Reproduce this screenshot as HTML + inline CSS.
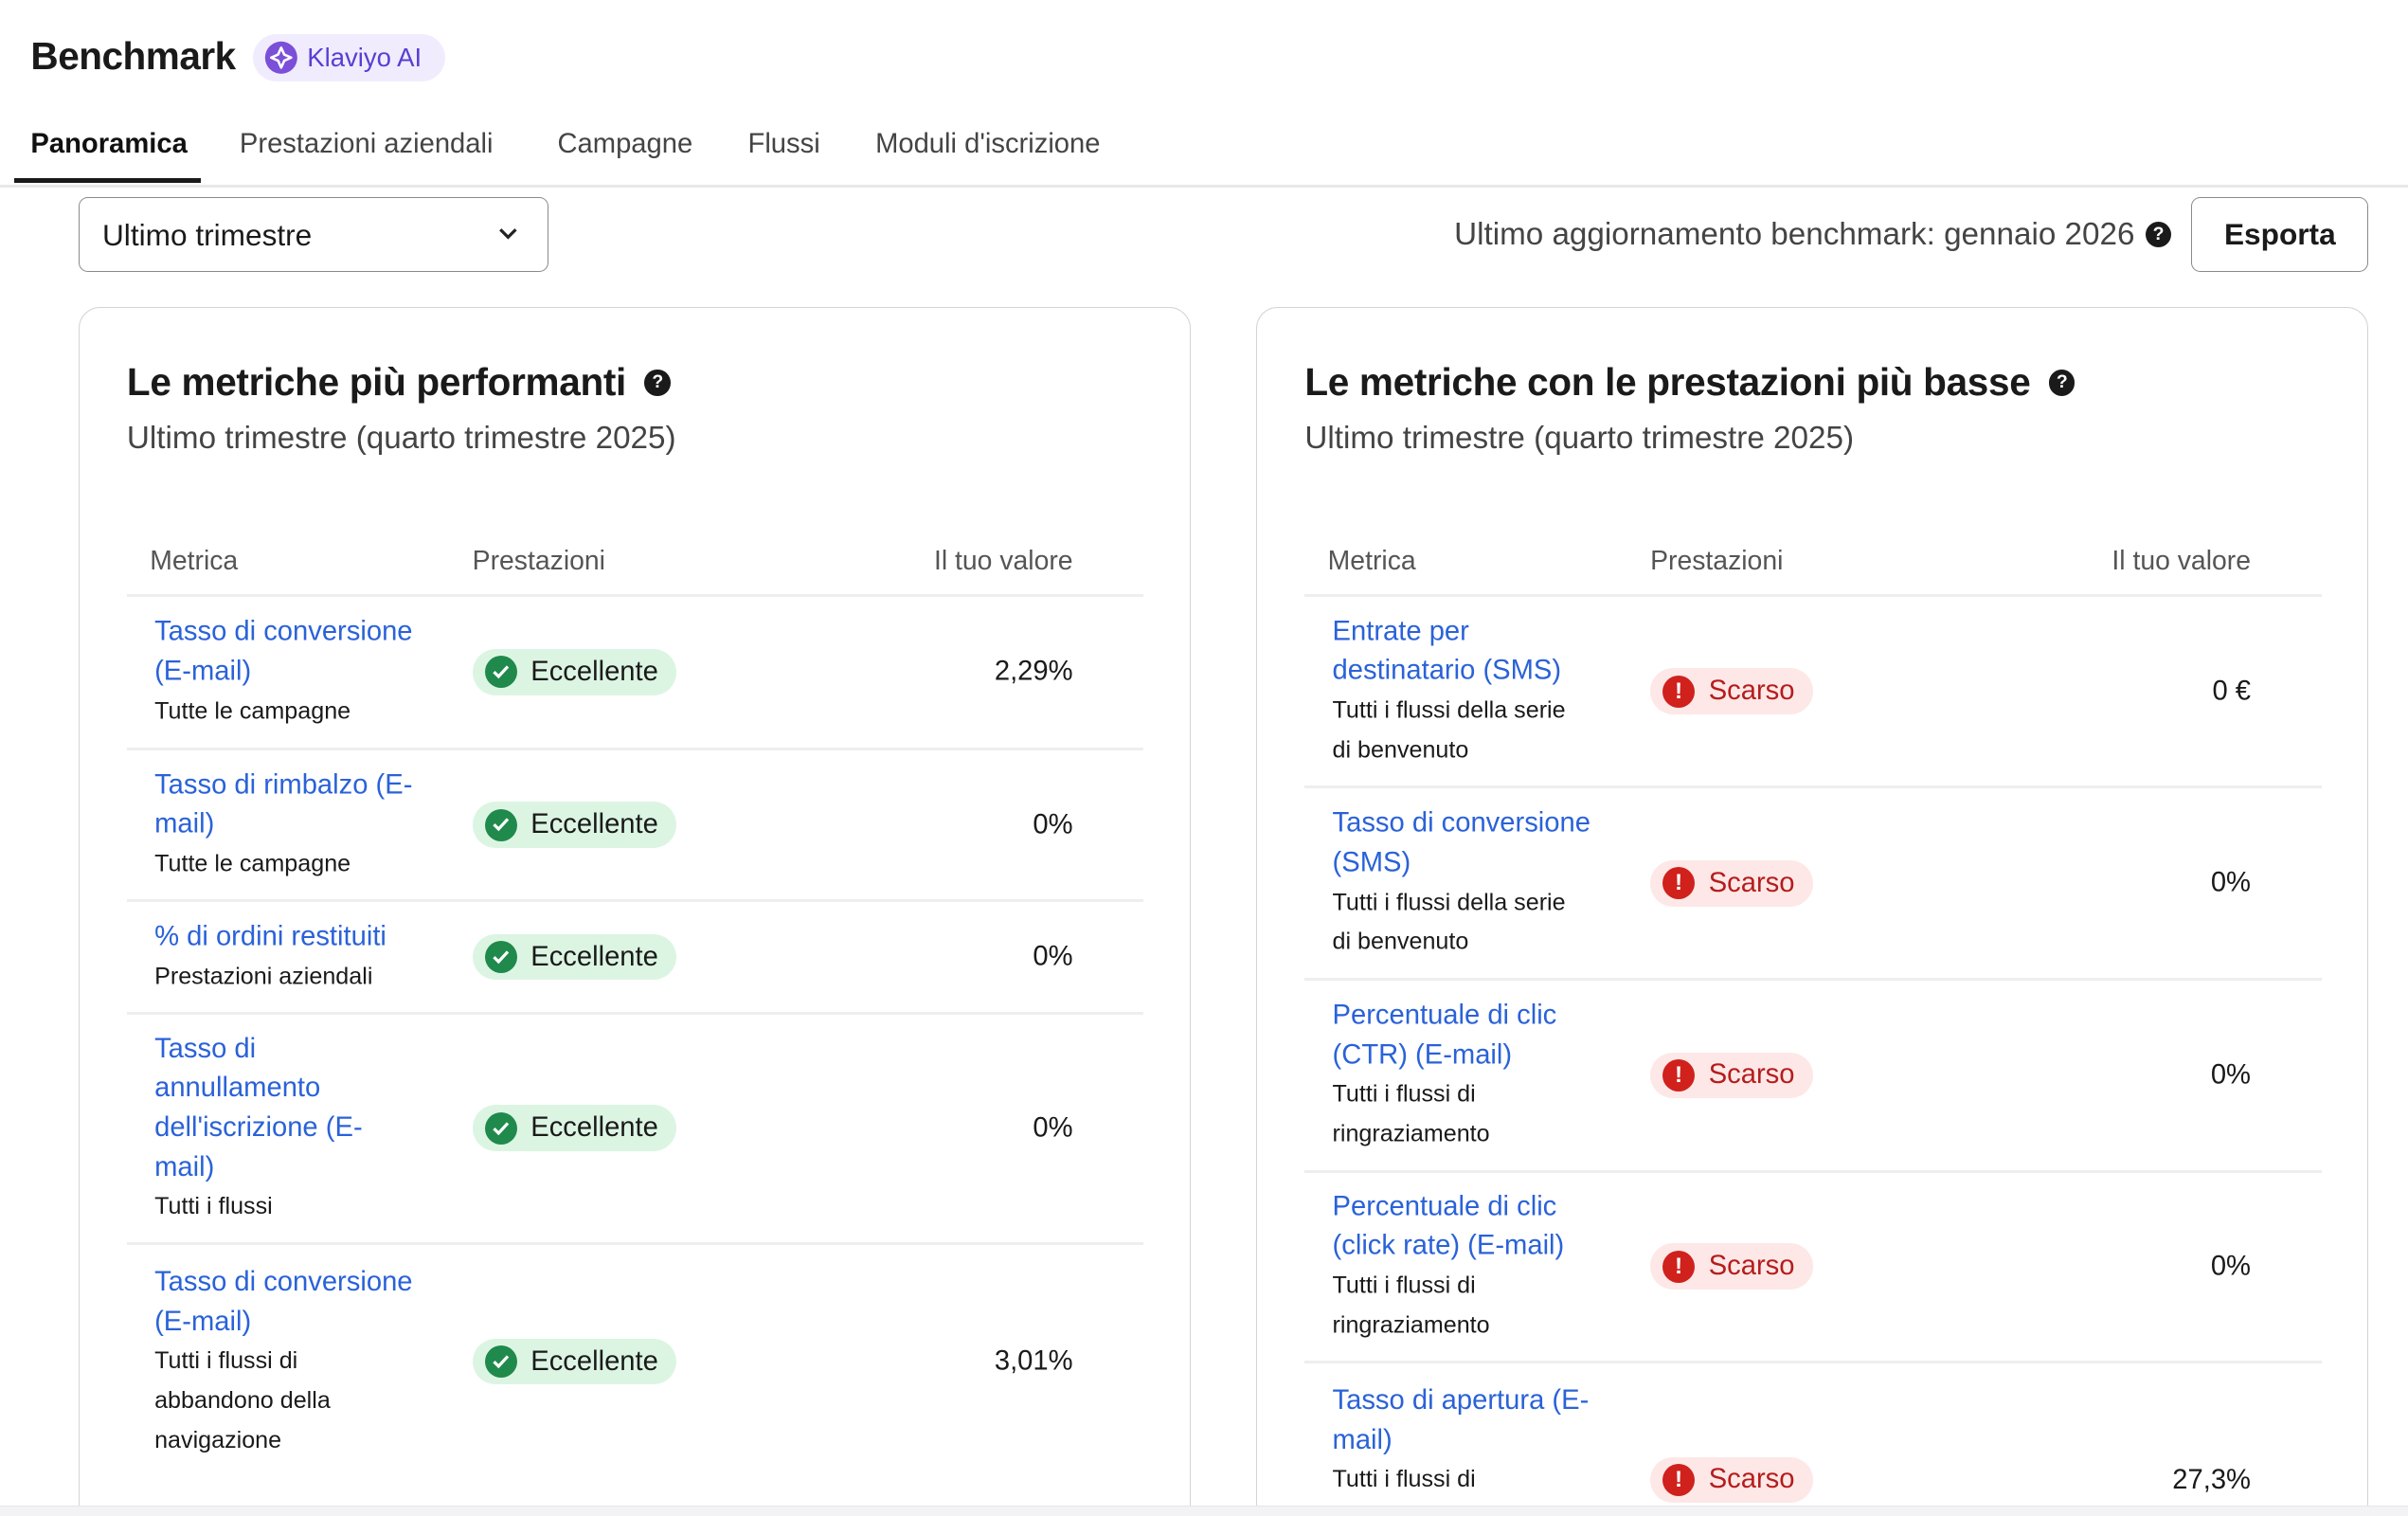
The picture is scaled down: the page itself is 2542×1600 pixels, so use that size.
<!DOCTYPE html>
<html><head><meta charset="utf-8">
<style>
html,body{margin:0;padding:0;background:#fff;overflow:hidden}
body{width:2542px;height:1600px}
#w{zoom:1.62117;width:1568px;height:987px;position:relative;font-family:"Liberation Sans",sans-serif;color:#1a1a1a;overflow:hidden}
.abs{position:absolute}
.h1{left:20px;top:22px;font-size:25px;font-weight:bold;letter-spacing:-0.3px}
.badge{left:165px;top:22px;height:31px;width:125px;border-radius:16px;background:#f1ecfd;color:#5a3ed3;font-size:17px;display:flex;align-items:center}
.tabs{left:0;top:82px;width:1568px;height:38px;border-bottom:2px solid #e8e8e8}
.tab{position:absolute;top:2px;font-size:18px;color:#444}
.sel{left:51px;top:128px;width:305px;height:48px;border:1px solid #8a8a8a;border-radius:6px;font-size:19.5px}
.btn{left:1427px;top:128px;width:114px;height:48px;border:1px solid #8a8a8a;border-radius:6px;font-size:19.5px;font-weight:600;display:flex;align-items:center;justify-content:center}
.card{top:200px;width:723px;height:820px;border:1px solid #d4d4d4;border-radius:14px}
.ct{position:absolute;left:31px;top:34px;font-size:25px;font-weight:bold;letter-spacing:-0.2px;display:flex;align-items:center}
.cs{position:absolute;left:31px;top:73px;font-size:20.5px;color:#444}
.q{display:inline-block;width:17px;height:17px;border-radius:50%;background:#1a1a1a;color:#fff;font-size:12px;font-weight:bold;text-align:center;line-height:17px;margin-left:12px}
.tbl{position:absolute;left:31px;top:150px;width:662px}
.hd{height:36px;border-bottom:2px solid #eeeeee;position:relative;font-size:17.5px;color:#555}
.row{position:relative;border-bottom:2px solid #eeeeee;box-sizing:border-box}
.m{position:absolute;left:18px;top:50%;transform:translateY(-50%);line-height:25.7px}
.lk{color:#2a62d8;font-size:18px;white-space:nowrap}
.sb{font-size:15.5px;color:#1a1a1a;white-space:nowrap}
.pill{position:absolute;left:225px;top:50%;margin-top:-15px;height:30px;border-radius:15px;display:flex;align-items:center;font-size:18px;padding:0 12px 0 8px}
.g{background:#dcf5e3;color:#1a1a1a}
.r{background:#fde8e7;color:#b51d1d}
.ic{width:21px;height:21px;border-radius:50%;margin-right:9px;display:flex;align-items:center;justify-content:center}
.v{position:absolute;right:46px;top:50%;transform:translateY(-50%);font-size:18px}
</style></head><body><div id="w">
<div class="abs h1">Benchmark</div>
<div class="abs badge"><svg width="22" height="22" viewBox="0 0 22 22" style="margin:0 6px 0 7px"><circle cx="11" cy="11" r="10.5" fill="#7b4fd8"/><path d="M11 4.5 L13 9 L17.5 11 L13 13 L11 17.5 L9 13 L4.5 11 L9 9 Z" fill="none" stroke="#fff" stroke-width="1.6" stroke-linejoin="round"/></svg>Klaviyo AI</div>
<div class="abs tabs">
<div class="tab" style="left:20px;color:#111;font-weight:bold">Panoramica</div>
<div class="tab" style="left:156px">Prestazioni aziendali</div>
<div class="tab" style="left:363px">Campagne</div>
<div class="tab" style="left:487px">Flussi</div>
<div class="tab" style="left:570px">Moduli d'iscrizione</div>
<div style="position:absolute;left:9px;top:34px;width:122px;height:3px;background:#1a1a1a"></div>
</div>
<div class="abs sel"><span style="position:absolute;left:15px;top:13px">Ultimo trimestre</span><svg style="position:absolute;left:272px;top:19px" width="14" height="10" viewBox="0 0 14 10"><path d="M2 2 L7 7 L12 2" fill="none" stroke="#222" stroke-width="2"/></svg></div>
<div class="abs" style="right:154px;top:141px;font-size:20.5px;color:#444;display:flex;align-items:center">Ultimo aggiornamento benchmark: gennaio 2026<span class="q" style="margin-left:7px">?</span></div>
<div class="abs btn">Esporta</div>

<div class="abs card" style="left:51px">
<div class="ct">Le metriche più performanti<span class="q">?</span></div>
<div class="cs">Ultimo trimestre (quarto trimestre 2025)</div>
<div class="tbl">
<div class="hd"><span style="position:absolute;left:15px;top:5px">Metrica</span><span style="position:absolute;left:225px;top:5px">Prestazioni</span><span style="position:absolute;right:46px;top:5px">Il tuo valore</span></div>
<div class="row" style="height:100px"><div class="m"><div class="lk">Tasso di conversione<br>(E-mail)</div><div class="sb">Tutte le campagne</div></div><div class="pill g"><div class="ic" style="background:#1f8a4c"><svg width="12" height="10"><path d="M1.5 5 L4.5 8 L10.5 1.5" fill="none" stroke="#fff" stroke-width="2"/></svg></div>Eccellente</div><div class="v">2,29%</div></div>
<div class="row" style="height:99px"><div class="m"><div class="lk">Tasso di rimbalzo (E-<br>mail)</div><div class="sb">Tutte le campagne</div></div><div class="pill g"><div class="ic" style="background:#1f8a4c"><svg width="12" height="10"><path d="M1.5 5 L4.5 8 L10.5 1.5" fill="none" stroke="#fff" stroke-width="2"/></svg></div>Eccellente</div><div class="v">0%</div></div>
<div class="row" style="height:73px"><div class="m"><div class="lk">% di ordini restituiti</div><div class="sb">Prestazioni aziendali</div></div><div class="pill g"><div class="ic" style="background:#1f8a4c"><svg width="12" height="10"><path d="M1.5 5 L4.5 8 L10.5 1.5" fill="none" stroke="#fff" stroke-width="2"/></svg></div>Eccellente</div><div class="v">0%</div></div>
<div class="row" style="height:150px"><div class="m"><div class="lk">Tasso di<br>annullamento<br>dell'iscrizione (E-<br>mail)</div><div class="sb">Tutti i flussi</div></div><div class="pill g"><div class="ic" style="background:#1f8a4c"><svg width="12" height="10"><path d="M1.5 5 L4.5 8 L10.5 1.5" fill="none" stroke="#fff" stroke-width="2"/></svg></div>Eccellente</div><div class="v">0%</div></div>
<div class="row" style="height:152px;border-bottom:none"><div class="m"><div class="lk">Tasso di conversione<br>(E-mail)</div><div class="sb">Tutti i flussi di<br>abbandono della<br>navigazione</div></div><div class="pill g"><div class="ic" style="background:#1f8a4c"><svg width="12" height="10"><path d="M1.5 5 L4.5 8 L10.5 1.5" fill="none" stroke="#fff" stroke-width="2"/></svg></div>Eccellente</div><div class="v">3,01%</div></div>
</div></div>

<div class="abs card" style="left:818px">
<div class="ct">Le metriche con le prestazioni più basse<span class="q">?</span></div>
<div class="cs">Ultimo trimestre (quarto trimestre 2025)</div>
<div class="tbl">
<div class="hd"><span style="position:absolute;left:15px;top:5px">Metrica</span><span style="position:absolute;left:225px;top:5px">Prestazioni</span><span style="position:absolute;right:46px;top:5px">Il tuo valore</span></div>
<div class="row" style="height:125px"><div class="m"><div class="lk">Entrate per<br>destinatario (SMS)</div><div class="sb">Tutti i flussi della serie<br>di benvenuto</div></div><div class="pill r"><div class="ic" style="background:#d0211c;color:#fff;font-weight:bold;font-size:15px">!</div>Scarso</div><div class="v">0 €</div></div>
<div class="row" style="height:125px"><div class="m"><div class="lk">Tasso di conversione<br>(SMS)</div><div class="sb">Tutti i flussi della serie<br>di benvenuto</div></div><div class="pill r"><div class="ic" style="background:#d0211c;color:#fff;font-weight:bold;font-size:15px">!</div>Scarso</div><div class="v">0%</div></div>
<div class="row" style="height:125px"><div class="m"><div class="lk">Percentuale di clic<br>(CTR) (E-mail)</div><div class="sb">Tutti i flussi di<br>ringraziamento</div></div><div class="pill r"><div class="ic" style="background:#d0211c;color:#fff;font-weight:bold;font-size:15px">!</div>Scarso</div><div class="v">0%</div></div>
<div class="row" style="height:124px"><div class="m"><div class="lk">Percentuale di clic<br>(click rate) (E-mail)</div><div class="sb">Tutti i flussi di<br>ringraziamento</div></div><div class="pill r"><div class="ic" style="background:#d0211c;color:#fff;font-weight:bold;font-size:15px">!</div>Scarso</div><div class="v">0%</div></div>
<div class="row" style="height:100px;border-bottom:none"><div class="m" style="top:12px;transform:none"><div class="lk">Tasso di apertura (E-<br>mail)</div><div class="sb">Tutti i flussi di</div></div><div class="pill r" style="top:61px;margin-top:0"><div class="ic" style="background:#d0211c;color:#fff;font-weight:bold;font-size:15px">!</div>Scarso</div><div class="v" style="top:61px;transform:none;line-height:30px">27,3%</div></div>
</div></div>
<div class="abs" style="left:0;top:980px;width:1568px;height:7px;background:#f3f3f5;border-top:1px solid #e6e6e6"></div>
</div></body></html>
